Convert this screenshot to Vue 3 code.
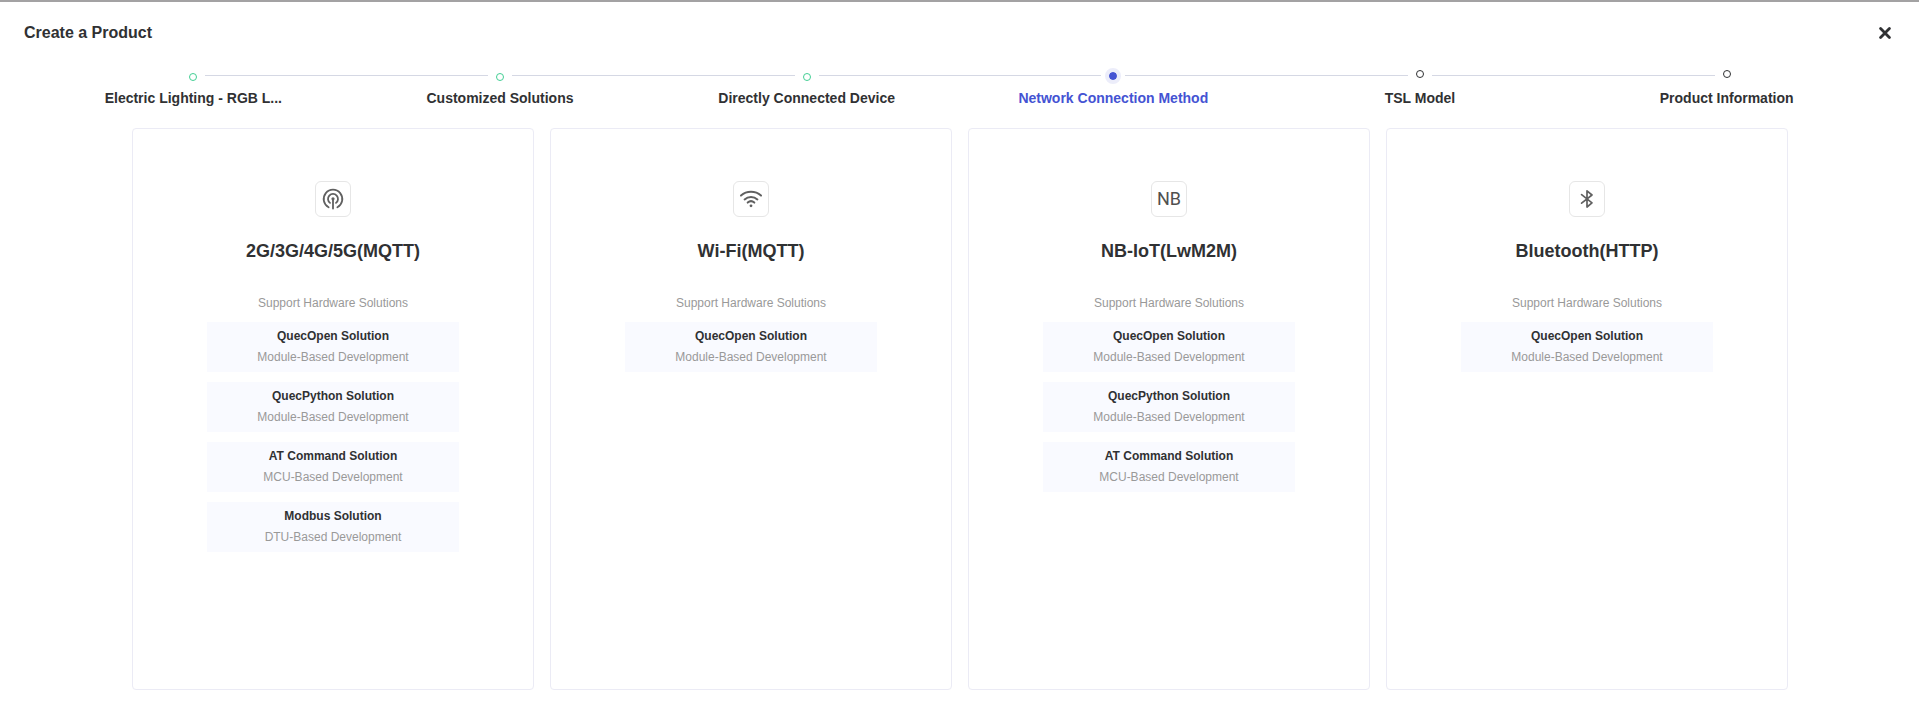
<script setup>
const steps = [
  { label: 'Electric Lighting - RGB L...', state: 'done' },
  { label: 'Customized Solutions', state: 'done' },
  { label: 'Directly Connected Device', state: 'done' },
  { label: 'Network Connection Method', state: 'current' },
  { label: 'TSL Model', state: 'pending' },
  { label: 'Product Information', state: 'pending' }
]

const quecOpen = { name: 'QuecOpen Solution', type: 'Module-Based Development' }
const quecPython = { name: 'QuecPython Solution', type: 'Module-Based Development' }
const atCommand = { name: 'AT Command Solution', type: 'MCU-Based Development' }
const modbus = { name: 'Modbus Solution', type: 'DTU-Based Development' }

const methods = [
  { icon: 'cellular', title: '2G/3G/4G/5G(MQTT)', solutions: [quecOpen, quecPython, atCommand, modbus] },
  { icon: 'wifi', title: 'Wi-Fi(MQTT)', solutions: [quecOpen] },
  { icon: 'nb', title: 'NB-IoT(LwM2M)', solutions: [quecOpen, quecPython, atCommand] },
  { icon: 'bluetooth', title: 'Bluetooth(HTTP)', solutions: [quecOpen] }
]
</script>

<template>
  <main class="dialog">
    <header class="head">
      <h1>Create a Product</h1>
      <button class="close" type="button" aria-label="Close">
        <svg width="12" height="12" viewBox="0 0 12 12" aria-hidden="true">
          <path d="M1.6 1.6L10.4 10.4M10.4 1.6L1.6 10.4" fill="none" stroke="currentColor" stroke-width="2.8" stroke-linecap="round" />
        </svg>
      </button>
    </header>

    <ol class="steps">
      <li v-for="step in steps" :key="step.label" class="step" :class="step.state">
        <div class="track">
          <span class="line"></span>
          <span class="slot"><span class="dot"></span></span>
          <span class="line"></span>
        </div>
        <span class="label">{{ step.label }}</span>
      </li>
    </ol>

    <section class="cards">
      <article v-for="method in methods" :key="method.title" class="card">
        <div class="icon">
          <svg v-if="method.icon === 'cellular'" width="22" height="22" viewBox="0 0 22 22" aria-hidden="true">
            <g fill="none" stroke="currentColor" stroke-width="1.8" stroke-linecap="round">
              <path d="M6.6 19.2A9.3 9.3 0 1 1 15.4 19.2" />
              <path d="M8 14.9A5 5 0 1 1 14 14.9" />
              <path d="M11 11V20.6" />
            </g>
            <circle cx="11" cy="10.8" r="1.6" fill="currentColor" />
          </svg>
          <svg v-else-if="method.icon === 'wifi'" width="24" height="22" viewBox="0 0 24 22" aria-hidden="true">
            <g fill="none" stroke="currentColor" stroke-width="2" stroke-linecap="round">
              <path d="M2 7.6C7.6 2.6 16.4 2.6 22 7.6" />
              <path d="M5.6 11.4C9.2 8.1 14.8 8.1 18.4 11.4" />
              <path d="M8.7 14.6C10.6 12.9 13.4 12.9 15.3 14.6" />
            </g>
            <circle cx="12" cy="17.8" r="1.4" fill="currentColor" />
          </svg>
          <span v-else-if="method.icon === 'nb'" class="nb">NB</span>
          <svg v-else width="22" height="22" viewBox="0 0 22 22" aria-hidden="true">
            <path d="M5.6 6.6L16 14.8L11 19V2.8L16 7L5.6 15.2" fill="none" stroke="currentColor" stroke-width="1.7" stroke-linecap="round" stroke-linejoin="round" />
          </svg>
        </div>
        <h2>{{ method.title }}</h2>
        <p class="support">Support Hardware Solutions</p>
        <ul class="solutions">
          <li v-for="solution in method.solutions" :key="solution.name">
            <strong>{{ solution.name }}</strong>
            <span>{{ solution.type }}</span>
          </li>
        </ul>
      </article>
    </section>
  </main>
</template>

<style>
body {
  margin: 0;
}
</style>

<style scoped>
.dialog {
  box-sizing: border-box;
  display: flex;
  flex-direction: column;
  min-height: 100vh;
  padding-bottom: 13px;
  border-top: 2px solid #a3a2a3;
  background: #fff;
  color: #303133;
  font-family: "Liberation Sans", Arial, sans-serif;
}

.head {
  display: flex;
  align-items: center;
  justify-content: space-between;
  height: 62px;
  padding: 0 24px;
}

h1 {
  margin: 0;
  font-size: 16px;
  line-height: 24px;
}

.close {
  display: flex;
  padding: 4px;
  border: 0;
  background: none;
  color: #303133;
  cursor: pointer;
}

.steps {
  display: grid;
  grid-template-columns: repeat(6, 1fr);
  margin: 0;
  padding: 4px 39px 0 40px;
  list-style: none;
}

.step {
  text-align: center;
}

.track {
  display: flex;
  align-items: flex-start;
  height: 16px;
}

.line {
  flex: 1;
  height: 1px;
  margin-top: 7px;
  background: #d5d8e4;
}

.step:first-child .line:first-child,
.step:last-child .line:last-child {
  visibility: hidden;
}

.slot {
  display: flex;
  justify-content: center;
  align-items: flex-start;
  box-sizing: border-box;
  width: 24px;
  height: 16px;
}

.dot {
  box-sizing: border-box;
  width: 8px;
  height: 8px;
  border: 1px solid #303133;
  border-radius: 50%;
}

.done .slot {
  padding-top: 5px;
}

.pending .slot {
  padding-top: 2px;
}

.done .dot {
  border-color: #43cf94;
}

.current .dot {
  width: 16px;
  height: 16px;
  border: 4px solid #ecedfa;
  background: #4453d3;
  background-clip: padding-box;
}

.label {
  display: block;
  margin-top: 4px;
  font-size: 14px;
  font-weight: 700;
  line-height: 20px;
}

.current .label {
  color: #4453d3;
}

.cards {
  flex: 1;
  display: grid;
  grid-template-columns: repeat(4, 1fr);
  gap: 16px;
  margin: 20px 131px 0 132px;
}

.card {
  padding: 52px 74px 24px;
  border: 1px solid #ebebf5;
  border-radius: 4px;
  text-align: center;
}

.icon {
  display: flex;
  align-items: center;
  justify-content: center;
  box-sizing: border-box;
  width: 36px;
  height: 36px;
  margin: 0 auto;
  border: 1px solid #e6e6e6;
  border-radius: 6px;
  color: #606060;
}

.nb {
  color: #505050;
  font-family: Roboto, sans-serif;
  font-size: 18px;
  line-height: 20px;
}

h2 {
  margin: 22px 0 0;
  font-size: 18px;
  line-height: 24px;
}

.support {
  margin: 30px 0 0;
  color: #999;
  font-size: 12px;
  line-height: 20px;
}

.solutions {
  display: grid;
  gap: 10px;
  margin: 9px 0 0;
  padding: 0;
  list-style: none;
}

.solutions li {
  padding: 4px 0;
  background: #f9faff;
  font-size: 12px;
  line-height: 21px;
}

.solutions strong,
.solutions span {
  display: block;
}

.solutions span {
  color: #999;
}
</style>
